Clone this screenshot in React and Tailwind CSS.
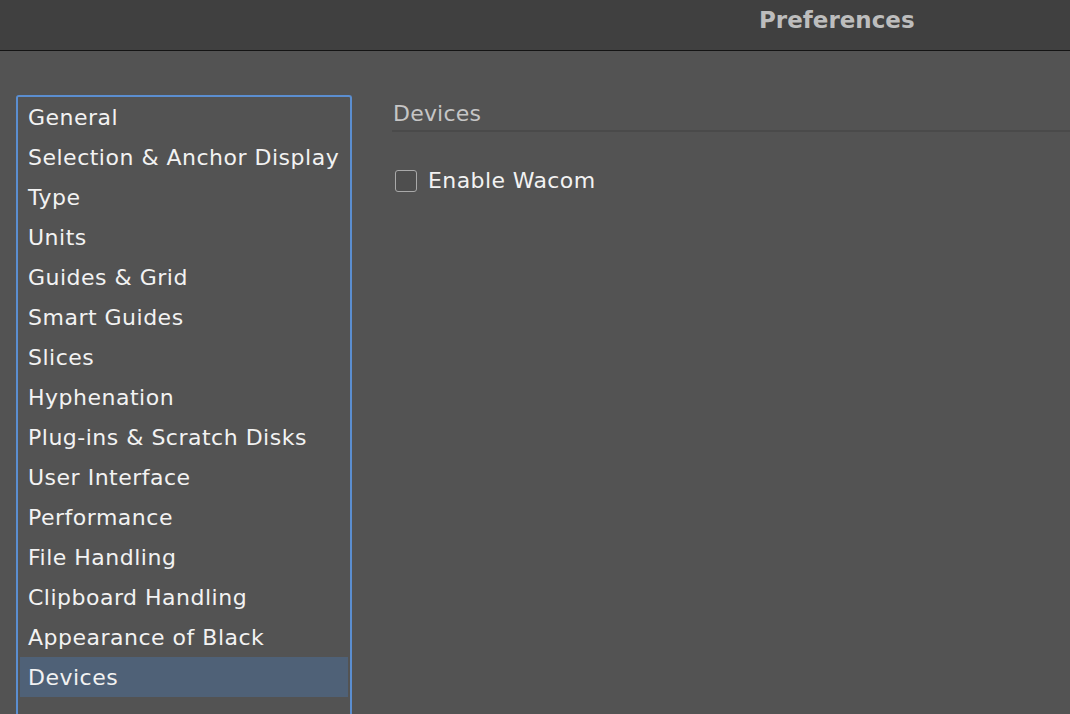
const items = [
  'General',
  'Selection & Anchor Display',
  'Type',
  'Units',
  'Guides & Grid',
  'Smart Guides',
  'Slices',
  'Hyphenation',
  'Plug-ins & Scratch Disks',
  'User Interface',
  'Performance',
  'File Handling',
  'Clipboard Handling',
  'Appearance of Black',
  'Devices',
]

export default function App() {
  const selected = 'Devices'
  return (
    <div
      className="w-[1070px] h-[714px] overflow-hidden bg-[#535353] flex flex-col"
      style={{ fontFamily: '"DejaVu Sans", "Noto Sans", sans-serif' }}
    >
      <div className="h-[51px] shrink-0 bg-[#404040] border-b border-[#141414] pt-[5px]">
        <div className="pl-[759px] text-[23px] font-bold text-[#bdbdbd] leading-[30px]">Preferences</div>
      </div>
      <div className="flex flex-1 pt-[44px] pl-[16px]">
        <div className="w-[336px] shrink-0 border-2 border-b-0 border-[#5b8ed0] rounded-t-[3px] px-[2px]">
          {items.map(item => (
            <div
              key={item}
              className={
                'h-[40px] flex items-center pl-[8px] text-[22px] text-[#f2f2f2] whitespace-nowrap tracking-[0.5px] ' +
                (item === selected ? 'bg-[#4f6177]' : '')
              }
            >
              {item}
            </div>
          ))}
        </div>
        <div className="flex-1 pl-[40px] pt-[2px]">
          <div className="h-[35px] flex items-center text-[22px] text-[#c6c6c6] border-b-2 border-[#4a4a4a] pl-[1px] tracking-[0.2px]">
            Devices
          </div>
          <div className="flex items-center mt-[32px] pl-[3px]">
            <div className="w-[22px] h-[22px] rounded-[3px] border border-[#a9a9a9] bg-[#4e4e4e]" />
            <span className="ml-[11px] text-[22px] text-[#f2f2f2] tracking-[0.4px]">Enable Wacom</span>
          </div>
        </div>
      </div>
    </div>
  )
}
